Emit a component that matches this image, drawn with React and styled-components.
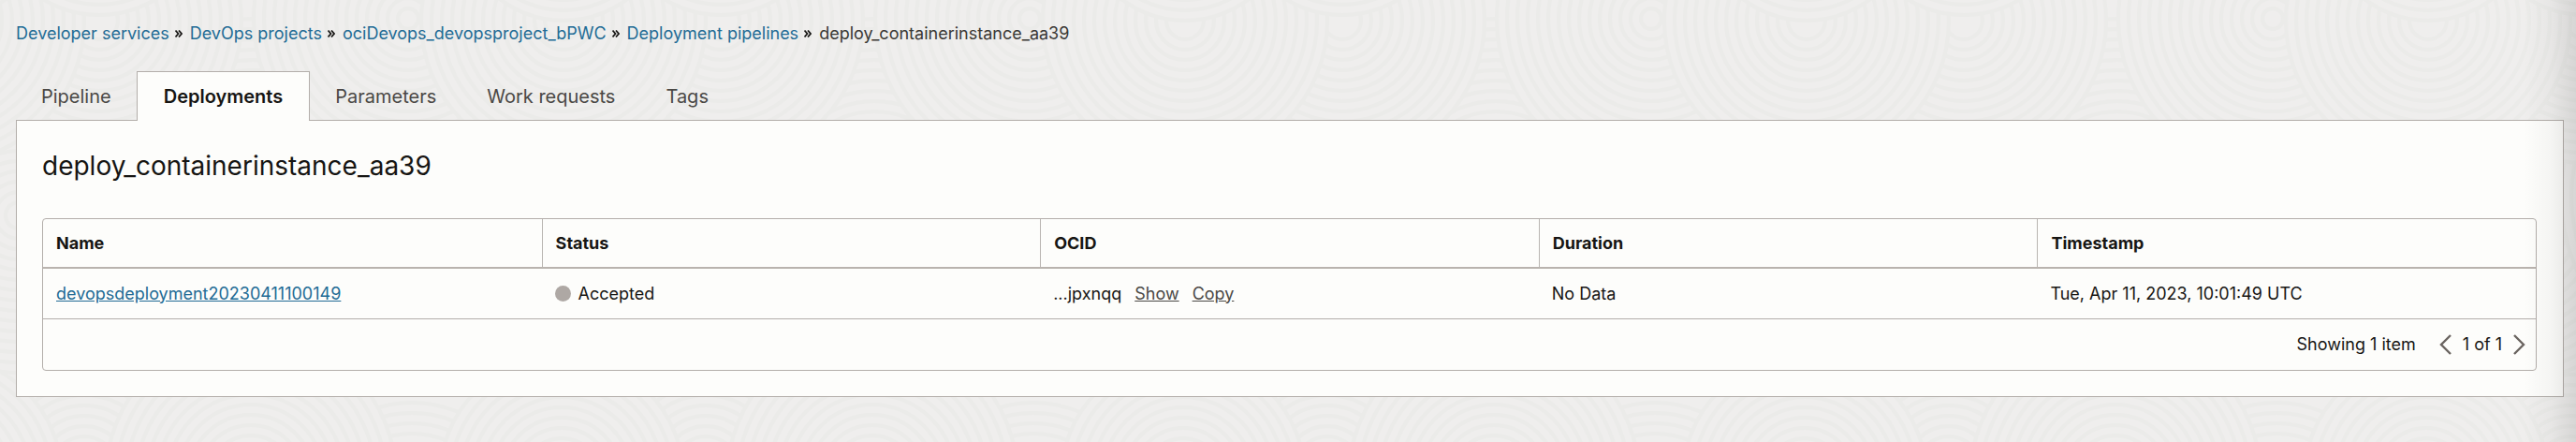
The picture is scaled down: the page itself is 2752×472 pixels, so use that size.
import React from "react";
import styled, { createGlobalStyle } from "styled-components";

const GlobalStyle = createGlobalStyle`
  *, *::before, *::after { box-sizing: border-box; }
  body {
    margin: 0;
    background: #efeeed;
    color: #161513;
    font-family: Inter, "Liberation Sans", sans-serif;
    font-size: 18px;
    line-height: 24px;
  }
`;

const Page = styled.div`
  position: relative;
  display: flex;
  flex-direction: column;
  min-height: 100vh;
  padding: 24px 13px 48px 17px;
`;

const Pattern = styled.svg`
  position: absolute;
  inset: 0;
  width: 100%;
  height: 100%;
`;

const EdgeShade = styled.div`
  position: absolute;
  top: 0;
  right: 0;
  bottom: 0;
  width: 56px;
  pointer-events: none;
  background: linear-gradient(to right, rgba(0, 0, 0, 0), rgba(0, 0, 0, 0.03) 50%, rgba(0, 0, 0, 0.1));
`;

const Breadcrumbs = styled.nav`
  position: relative;
  display: flex;
  align-items: center;
`;

const Crumb = styled.a`
  color: #226b95;
  text-decoration: none;
`;

const Current = styled.span`
  color: #3a3835;
`;

const Separator = styled.svg`
  width: 8px;
  height: 8px;
  margin: 0 8px 0 6px;
`;

const Tabs = styled.div`
  position: relative;
  z-index: 1;
  display: flex;
  margin-top: 28px;
  margin-bottom: -1px;
`;

const Tab = styled.button`
  height: 53px;
  padding: 0 ${(p) => (p.$active ? 28 : 26)}px;
  border: 1px solid ${(p) => (p.$active ? "#b3aeaa" : "transparent")};
  border-bottom: 0;
  background: ${(p) => (p.$active ? "#fdfdfb" : "transparent")};
  color: ${(p) => (p.$active ? "#161513" : "#4a4845")};
  font: inherit;
  font-size: 20px;
  font-weight: ${(p) => (p.$active ? 600 : 400)};
`;

const Panel = styled.main`
  position: relative;
  padding: 32px 28px 27px 27px;
  border: 1px solid #b3aeaa;
  background: #fdfdfb;
`;

const Title = styled.h1`
  margin: 0 0 40px;
  font-size: 28px;
  font-weight: 400;
  line-height: 32px;
`;

const TableFrame = styled.div`
  border: 1px solid #b3aeaa;
  border-radius: 4px;
`;

const Table = styled.table`
  width: 100%;
  table-layout: fixed;
  border-collapse: separate;
  border-spacing: 0;
`;

const Th = styled.th`
  height: 53px;
  padding: 0 14px;
  border-bottom: 2px solid #b9b3ae;
  text-align: left;
  font-weight: 700;
  & + & { border-left: 1px solid #b9b5b1; }
`;

const Td = styled.td`
  height: 54px;
  padding: 0 14px;
  border-bottom: 1px solid #b3aeaa;
`;

const NameLink = styled.a`
  color: #226b95;
  text-decoration: underline;
`;

const Status = styled.span`
  display: flex;
  align-items: center;
  gap: 8px;
`;

const Dot = styled.i`
  width: 17px;
  height: 17px;
  border-radius: 50%;
  background: #aea8a4;
`;

const TextButton = styled.button`
  margin-left: 14px;
  padding: 0;
  border: 0;
  background: none;
  color: #4a4845;
  font: inherit;
  text-decoration: underline;
`;

const Footer = styled.div`
  display: flex;
  align-items: center;
  justify-content: flex-end;
  height: 54px;
  padding-right: 11px;
`;

const Pager = styled.div`
  display: flex;
  align-items: center;
  gap: 12px;
  margin-left: 25px;
`;

const PageButton = styled.button`
  display: flex;
  padding: 0;
  border: 0;
  background: none;
  color: #6a6460;
`;

const Chevron = ({ d }) => (
  <svg width="13" height="22" viewBox="0 0 13 22" fill="none" stroke="currentColor" strokeWidth="2.4" aria-hidden="true">
    <path d={d} />
  </svg>
);

const crumbs = ["Developer services", "DevOps projects", "ociDevops_devopsproject_bPWC", "Deployment pipelines"];
const tabs = ["Pipeline", "Deployments", "Parameters", "Work requests", "Tags"];
const columns = ["Name", "Status", "OCID", "Duration", "Timestamp"];

// Centre and outer radius of each set of contour rings; later sets cover earlier ones.
const hills = [
  [20, 230, 190], [270, 210, 190], [520, 230, 190], [684, 230, 190],
  [106, 22, 152], [770, 22, 152], [436, 20, 165], [-62, 22, 152], [602, 22, 152],
  [106, -100, 116], [602, -90, 112], [-62, -90, 112],
  [90, 500, 100], [754, 500, 100], [440, 560, 130], [600, 510, 130], [-64, 510, 130], [268, 510, 155],
];

const Background = () => (
  <Pattern aria-hidden="true">
    <defs>
      <pattern id="contours" width="664" height="480" patternUnits="userSpaceOnUse">
        {hills.map(([x, y, radius], i) => (
          <g key={i} fill="#efeeed" stroke="#ebebe9" strokeWidth="4">
            {Array.from({ length: Math.floor(radius / 11) }, (_, r) => (
              <circle key={r} cx={x} cy={y} r={radius - r * 11} />
            ))}
          </g>
        ))}
      </pattern>
    </defs>
    <rect width="100%" height="100%" fill="url(#contours)" />
  </Pattern>
);

export default function App() {
  return (
    <>
      <GlobalStyle />
      <Page>
        <Background />
        <Breadcrumbs aria-label="Breadcrumb">
          {crumbs.map((c) => (
            <React.Fragment key={c}>
              <Crumb href="#">{c}</Crumb>
              <Separator viewBox="0 0 8 8" fill="none" stroke="#161513" strokeWidth="1.7" aria-hidden="true">
                <path d="M0.5 0.5L3.5 4L0.5 7.5M4 0.5L7 4L4 7.5" />
              </Separator>
            </React.Fragment>
          ))}
          <Current aria-current="page">deploy_containerinstance_aa39</Current>
        </Breadcrumbs>
        <Tabs role="tablist">
          {tabs.map((t) => (
            <Tab key={t} role="tab" $active={t === "Deployments"} aria-selected={t === "Deployments"}>{t}</Tab>
          ))}
        </Tabs>
        <Panel>
          <Title>deploy_containerinstance_aa39</Title>
          <TableFrame>
            <Table>
              <thead>
                <tr>{columns.map((c) => <Th key={c} scope="col">{c}</Th>)}</tr>
              </thead>
              <tbody>
                <tr>
                  <Td><NameLink href="#">devopsdeployment20230411100149</NameLink></Td>
                  <Td><Status><Dot />Accepted</Status></Td>
                  <Td>...jpxnqq<TextButton>Show</TextButton><TextButton>Copy</TextButton></Td>
                  <Td>No Data</Td>
                  <Td>Tue, Apr 11, 2023, 10:01:49 UTC</Td>
                </tr>
              </tbody>
            </Table>
            <Footer>
              <span>Showing 1 item</span>
              <Pager>
                <PageButton aria-label="Previous page"><Chevron d="M12 1L2 11l10 10" /></PageButton>
                <span>1 of 1</span>
                <PageButton aria-label="Next page"><Chevron d="M1 1l10 10L1 21" /></PageButton>
              </Pager>
            </Footer>
          </TableFrame>
        </Panel>
        <EdgeShade />
      </Page>
    </>
  );
}
